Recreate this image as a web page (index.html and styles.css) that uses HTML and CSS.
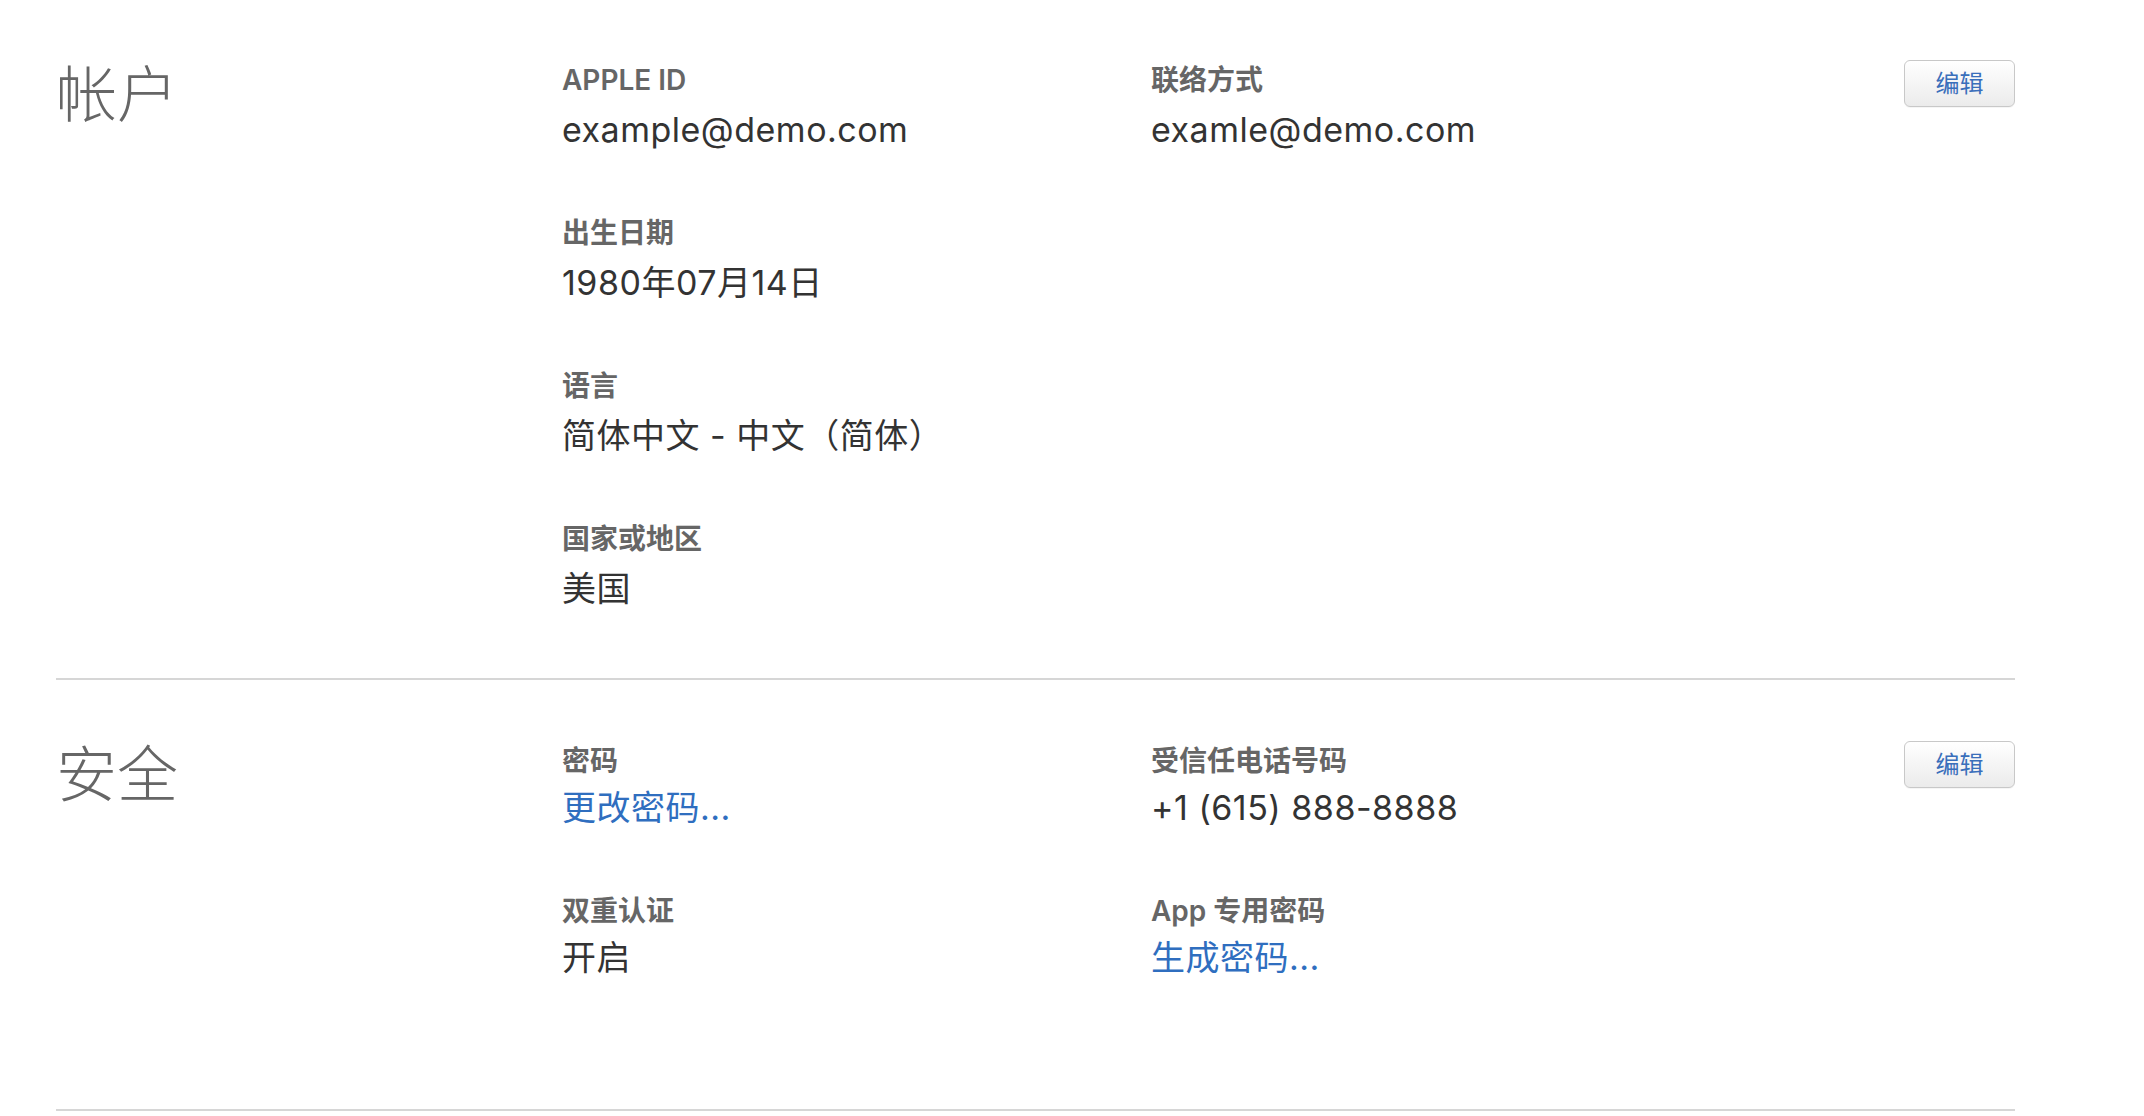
FILE: index.html
```html
<!DOCTYPE html>
<html lang="zh-CN">
<head>
<meta charset="utf-8">
<title>帐户</title>
<link rel="stylesheet" href="styles.css">
</head>
<body>
<main class="page">
  <section class="section section-account">
    <h2 class="section-title">帐户</h2>
    <div class="fields">
      <div class="field">
        <div class="label">APPLE ID</div>
        <div class="value">example@demo.com</div>
      </div>
      <div class="field">
        <div class="label">联络方式</div>
        <div class="value">examle@demo.com</div>
      </div>
      <div class="field">
        <div class="label">出生日期</div>
        <div class="value">1980年07月14日</div>
      </div>
      <div class="field empty"></div>
      <div class="field">
        <div class="label">语言</div>
        <div class="value">简体中文 - 中文（简体）</div>
      </div>
      <div class="field empty"></div>
      <div class="field">
        <div class="label">国家或地区</div>
        <div class="value">美国</div>
      </div>
      <div class="field empty"></div>
    </div>
    <div class="actions"><button class="edit-btn" type="button">编辑</button></div>
  </section>
  <section class="section section-security">
    <h2 class="section-title">安全</h2>
    <div class="fields">
      <div class="field">
        <div class="label">密码</div>
        <div class="value"><a class="link" href="#">更改密码...</a></div>
      </div>
      <div class="field">
        <div class="label">受信任电话号码</div>
        <div class="value">+1 (615) 888-8888</div>
      </div>
      <div class="field">
        <div class="label">双重认证</div>
        <div class="value">开启</div>
      </div>
      <div class="field">
        <div class="label">App 专用密码</div>
        <div class="value"><a class="link" href="#">生成密码...</a></div>
      </div>
    </div>
    <div class="actions"><button class="edit-btn" type="button">编辑</button></div>
  </section>
</main>
</body>
</html>
```
FILE: styles.css
```css
html, body {
  margin: 0;
  padding: 0;
  background: #ffffff;
}

body {
  font-family: "Inter", "Noto Sans CJK SC", sans-serif;
  color: #333333;
}

.page {
  margin-left: 56px;
  width: 1959px;
}

.section {
  display: grid;
  grid-template-columns: 506px 1fr auto;
  border-bottom: 2px solid #d6d6d6;
}

.section-account {
  padding: 63px 0 65px;
}

.section-security {
  padding: 64px 0 127px;
}

.section-title {
  margin: -4px 0 0;
  font-size: 61px;
  line-height: 72px;
  font-weight: 300;
  color: #666666;
}

.section-security .section-title {
  margin-top: -5px;
}

.fields {
  display: grid;
  grid-template-columns: 589px 1fr;
  row-gap: 62px;
}

.label {
  font-size: 28px;
  line-height: 34px;
  font-weight: 600;
  color: #666666;
}

.value {
  margin-top: 9px;
  font-size: 34px;
  line-height: 48px;
  font-weight: 400;
  letter-spacing: 0.5px;
  color: #333333;
}

.section-security .value {
  margin-top: 6px;
}

.link {
  color: #2f6ebf;
  text-decoration: none;
}

.actions {
  align-self: start;
  margin-top: -3px;
}

.edit-btn {
  display: block;
  width: 111px;
  height: 47px;
  padding: 0;
  border: 1px solid #c8c8c8;
  border-radius: 6px;
  background: linear-gradient(#ffffff, #ebebeb);
  box-shadow: 0 1px 0 rgba(0, 0, 0, 0.04);
  font-family: "Inter", "Noto Sans CJK SC", sans-serif;
  font-size: 24px;
  line-height: 45px;
  color: #3a6fbb;
  cursor: pointer;
}
```
